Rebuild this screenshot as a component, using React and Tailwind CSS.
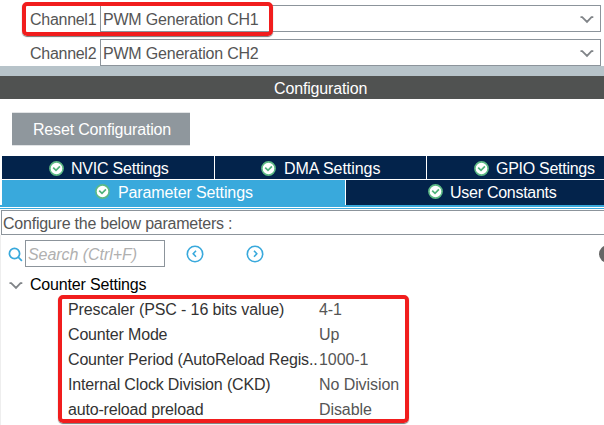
const T = ({ className = '', children }) => (
  <span className={`block shrink-0 whitespace-pre leading-[20px] ${className}`}>{children}</span>
);

const Chevron = ({ className = '' }) => (
  <svg width="14" height="8" viewBox="0 0 14 8" className={`shrink-0 ${className}`} fill="none" stroke="#808488" strokeWidth="1.8">
    <path d="M0.5 1.2 H2.2 L7 5.9 L11.5 1.2 H13.3" />
  </svg>
);

const Check = () => (
  <svg width="15" height="15" viewBox="0 0 15 15" className="shrink-0">
    <circle cx="7.5" cy="7.5" r="6.6" fill="#fff" stroke="#5dba85" strokeWidth="1.6" />
    <path d="M4.2 6.6 L7 9.3 L10.9 5.4" fill="none" stroke="#4fb27a" strokeWidth="1.7" />
  </svg>
);

const Channel = ({ label, value }) => (
  <div className="flex h-[27px] items-center">
    <T className="w-[100px] pt-[2px] pl-[30px] tracking-[-0.28px] text-[#555]">{label}</T>
    <div className="flex h-[27px] w-[501px] items-center justify-between border border-[#8c949b] pr-[6px] pl-[2px]">
      <T className="pt-[2px] tracking-[-0.2px] text-[#555]">{value}</T>
      <Chevron className="mt-[2px]" />
    </div>
  </div>
);

const Tab = ({ label, className = '', textClass = '-mt-[2px] ml-[7px]' }) => (
  <div className={`flex shrink-0 text-white ${className}`}>
    <Check />
    <T className={textClass}>{label}</T>
  </div>
);

const Round = ({ d }) => (
  <svg width="18" height="18" viewBox="0 0 18 18" fill="none" stroke="#39a9dc">
    <circle cx="9" cy="9" r="7.7" strokeWidth="1.6" />
    <path d={d} strokeWidth="1.6" />
  </svg>
);

const params = [
  ['Prescaler (PSC - 16 bits value)', '4-1', 'tracking-[-0.11px]'],
  ['Counter Mode', 'Up', 'tracking-[-0.17px]'],
  ['Counter Period (AutoReload Regis..', '1000-1', 'tracking-[-0.17px]'],
  ['Internal Clock Division (CKD)', 'No Division', 'tracking-[-0.16px]'],
  ['auto-reload preload', 'Disable', 'tracking-[-0.18px]'],
];

export default function App() {
  return (
    <div className="relative flex h-[425px] w-[604px] flex-col overflow-hidden bg-white font-['Liberation_Sans',Arial,sans-serif] text-[16px]">
      <div className="flex h-[66px] shrink-0 flex-col gap-[7px] pt-[5px]">
        <Channel label="Channel1" value="PWM Generation CH1" />
        <Channel label="Channel2" value="PWM Generation CH2" />
      </div>
      <div className="h-[10px] shrink-0 bg-[#b7c3c9]" />
      <div className="flex h-[23px] shrink-0 items-center bg-[#505251] pt-[2px] pl-[274px] text-white">
        <T className="tracking-[-0.15px]">Configuration</T>
      </div>
      <div className="h-[57px] shrink-0 pt-[13px] pl-[12px]">
        <div className="flex h-[34px] w-[178px] items-center border-y border-[#e2e4e6] bg-[#8f979d] pt-[2px] pl-[21px] text-white">
          <T className="tracking-[-0.18px]">Reset Configuration</T>
        </div>
      </div>
      <div className="ml-[2px] flex h-[23px] shrink-0 gap-px">
        <Tab label="NVIC Settings" className="w-[212px] bg-[#03234b] pt-[5px] pl-[47px] tracking-[-0.22px]" />
        <Tab label="DMA Settings" className="w-[211px] bg-[#03234b] pt-[5px] pl-[46px] tracking-[-0.05px]" textClass="-mt-[2px] ml-[8px]" />
        <Tab label="GPIO Settings" className="w-[177px] bg-[#03234b] pt-[5px] pl-[47px] tracking-[-0.28px]" />
      </div>
      <div className="mt-px ml-[2px] flex h-[25px] shrink-0 gap-px">
        <Tab label="Parameter Settings" className="w-[343px] bg-[#39a9dc] pt-[4px] pl-[93px] tracking-[-0.12px]" textClass="-mt-px ml-[8px]" />
        <Tab label="User Constants" className="w-[258px] bg-[#03234b] pt-[4px] pl-[82px] tracking-[-0.27px]" textClass="-mt-px ml-[7px]" />
      </div>
      <div className="mb-px h-[2px] shrink-0 bg-[#39a9dc]" />
      <div className="mb-px h-px shrink-0 bg-[#39a9dc]" />
      <div className="ml-px flex h-[25px] shrink-0 items-center border-y border-l border-[#8c949b] pt-[2px] pl-px text-[#555]">
        <T className="tracking-[-0.23px]">Configure the below parameters :</T>
      </div>
      <div className="flex h-[190px] shrink-0 flex-col border-l border-[#eeeeee]">
        <div className="flex h-[37px] pt-[5px] pl-[7px]">
          <svg width="16" height="16" viewBox="0 0 16 16" className="mt-[7px] shrink-0" fill="none" stroke="#39a9dc" strokeWidth="1.7">
            <circle cx="6.5" cy="6.5" r="5.1" />
            <path d="M10.2 10.2 L13.9 13.9" />
          </svg>
          <div className="ml-px flex h-[27px] w-[140px] shrink-0 items-center border border-[#8c949b] pt-[2px] pl-[2px] text-[#b0b0b0] italic">
            <T className="tracking-[-0.05px]">Search (Ctrl+F)</T>
          </div>
          <div className="mt-[5px] ml-[21px] flex shrink-0 gap-[42px]">
            <Round d="M10 5.8 L7.2 8.8 L10 11.8" />
            <Round d="M8 5.8 L10.8 8.8 L8 11.8" />
          </div>
          <div className="mt-[5px] ml-[335px] h-[18px] w-[18px] shrink-0 rounded-full bg-[#666]" />
        </div>
        <div className="flex h-[25px] items-center pl-[8px]">
          <Chevron className="mt-[2px]" />
          <T className="ml-[7px] tracking-[-0.18px] text-black">Counter Settings</T>
        </div>
        {params.map(([name, value, tracking]) => (
          <div key={name} className="flex h-[25px] items-center pl-[67px]">
            <T className={`w-[251px] text-[#333] ${tracking}`}>{name}</T>
            <T className="tracking-[-0.08px] text-[#555]">{value}</T>
          </div>
        ))}
      </div>
      <div className="absolute top-[2px] left-[22px] h-[34px] w-[251px] rounded-[5px] border-4 border-[#f11d1d] shadow-[0_1px_1px_#777]" />
      <div className="absolute top-[295px] left-[58px] h-[128px] w-[351px] rounded-[5px] border-4 border-[#f11d1d] shadow-[0_1px_1px_#777]" />
    </div>
  );
}
